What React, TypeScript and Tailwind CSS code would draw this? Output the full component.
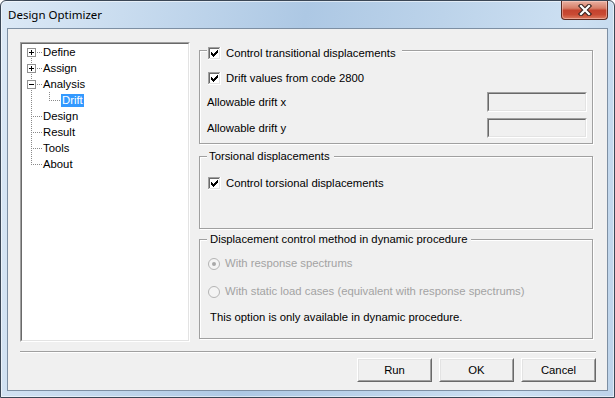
import type { ReactNode } from 'react';

const FONT = "font-['Liberation_Sans',Arial,sans-serif]";

type TreeRow = {
  label: string;
  level: 0 | 1;
  box?: '+' | '-';
  first?: boolean;
  last?: boolean;
  selected?: boolean;
};

const TREE: TreeRow[] = [
  { label: 'Define', level: 0, box: '+', first: true },
  { label: 'Assign', level: 0, box: '+' },
  { label: 'Analysis', level: 0, box: '-' },
  { label: 'Drift', level: 1, selected: true },
  { label: 'Design', level: 0 },
  { label: 'Result', level: 0 },
  { label: 'Tools', level: 0 },
  { label: 'About', level: 0, last: true },
];

// dotted connector, one pixel on / one off
function dots(x1: number, y1: number, x2: number, y2: number) {
  const out: ReactNode[] = [];
  if (y1 === y2) {
    for (let x = x1; x <= x2; x += 2) out.push(<rect key={`h${x}-${y1}`} x={x} y={y1} width={1} height={1} />);
  } else {
    for (let y = y1; y <= y2; y += 2) out.push(<rect key={`v${x1}-${y}`} x={x1} y={y} width={1} height={1} />);
  }
  return out;
}

function TreeGutter({ row }: { row: TreeRow }) {
  const w = row.level === 0 ? 20 : 39;
  return (
    <svg width={w} height={16} className="shrink-0" shapeRendering="crispEdges">
      <g fill="#8a8a8a">
        {row.level === 1 ? (
          <>
            {dots(9, 0, 9, 15)}
            {dots(27, 0, 27, 8)}
            {dots(29, 8, 37, 8)}
          </>
        ) : row.box ? (
          <>
            {!row.first && dots(9, 0, 9, 3)}
            {dots(9, 14, 9, 15)}
            {dots(15, 8, 19, 8)}
          </>
        ) : (
          <>
            {dots(9, 0, 9, row.last ? 8 : 15)}
            {dots(11, 8, 19, 8)}
          </>
        )}
      </g>
      {row.box && (
        <>
          <rect x={5.5} y={4.5} width={8} height={8} fill="#fff" stroke="#919191" />
          <rect x={7} y={8} width={5} height={1} fill="#000" />
          {row.box === '+' && <rect x={9} y={6} width={1} height={5} fill="#000" />}
        </>
      )}
    </svg>
  );
}

function CheckBox() {
  const cols = [2, 3, 4, 3, 2, 1, 0];
  return (
    <svg width={13} height={13} className="shrink-0" shapeRendering="crispEdges">
      <rect x={0} y={0} width={13} height={13} fill="#fff" />
      <rect x={0} y={0} width={12} height={1} fill="#a0a0a0" />
      <rect x={0} y={0} width={1} height={12} fill="#a0a0a0" />
      <rect x={1} y={1} width={10} height={1} fill="#696969" />
      <rect x={1} y={1} width={1} height={10} fill="#696969" />
      <rect x={1} y={11} width={11} height={1} fill="#e3e3e3" />
      <rect x={11} y={1} width={1} height={11} fill="#e3e3e3" />
      {cols.map((s, c) => (
        <rect key={c} x={3 + c} y={3 + s} width={1} height={3} fill="#000" />
      ))}
    </svg>
  );
}

function Radio({ checked }: { checked?: boolean }) {
  return (
    <svg width={12} height={12} className="shrink-0">
      <circle cx={6} cy={6} r={5.5} fill="#f4f4f4" stroke="#b4b4b4" />
      {checked && <circle cx={6} cy={6} r={2} fill="#a8a8a8" />}
    </svg>
  );
}

function Sunken({ className, children }: { className: string; children?: ReactNode }) {
  return (
    <div className={`border border-t-[#a0a0a0] border-l-[#a0a0a0] border-r-white border-b-white ${className}`}>
      <div className="h-full w-full border border-t-[#696969] border-l-[#696969] border-r-[#e3e3e3] border-b-[#e3e3e3]">
        {children}
      </div>
    </div>
  );
}

function DlgButton({ children }: { children: ReactNode }) {
  return (
    <button
      type="button"
      className="h-[24px] w-[75px] border border-t-white border-l-white border-r-[#696969] border-b-[#696969] bg-[#f0f0f0] p-0"
    >
      <div className="flex h-full w-full items-center justify-center border border-t-[#e3e3e3] border-l-[#e3e3e3] border-r-[#a0a0a0] border-b-[#a0a0a0] text-[11.3px] text-black">
        {children}
      </div>
    </button>
  );
}

const GROUP = 'relative border border-[#a0a0a0] shadow-[inset_1px_1px_0_#fff,1px_1px_0_#fff]';

export default function App() {
  return (
    <div className="h-[398px] w-[615px] bg-white">
      <div className="relative flex h-[398px] w-[615px] flex-col rounded-t-[6px] border border-[#3b4756] bg-[linear-gradient(100deg,#dce9f6_0%,#c9dcef_18%,#adc8e4_45%,#bcd3ea_65%,#cde0f2_85%,#bdd3ea_100%)] shadow-[inset_0_0_0_1px_rgba(255,255,255,0.55)]">
        {/* title bar */}
        <div className="flex h-[27px] shrink-0 items-center pl-[7px] pt-[1px] font-['Noto_Sans',sans-serif] text-[11.5px] text-black">
          Design Optimizer
        </div>
        <div className="absolute right-[6px] top-0 flex h-[19px] w-[47px] items-center justify-center rounded-b-[4px] border border-t-0 border-[#5b2a21] bg-[linear-gradient(180deg,#eab1a2_0%,#d77e68_40%,#c4432e_52%,#c94a33_75%,#dc7a5e_100%)] shadow-[inset_0_0_0_1px_rgba(255,220,210,0.45)]">
          <svg width={16} height={12} viewBox="0 0 16 12">
            <path d="M4 2 L12 10 M12 2 L4 10" stroke="#3d2622" strokeWidth={4.4} strokeLinecap="square" />
            <path d="M4 2 L12 10 M12 2 L4 10" stroke="#fff" strokeWidth={2.2} strokeLinecap="square" />
          </svg>
        </div>

        {/* client area */}
        <div className={`mx-[6px] mb-[6px] flex flex-1 flex-col border border-[#7d8fa3] bg-[#f0f0f0] pl-[12px] pt-[13px] text-[11.3px] text-black ${FONT}`}>
          <div className="flex">
            <Sunken className="h-[300px] w-[170px] bg-white">
              <div className="flex flex-col">
                {TREE.map((row) => (
                  <div key={row.label} className="flex h-[16px] items-center">
                    <TreeGutter row={row} />
                    <span
                      className={
                        row.selected
                          ? 'h-[13px] bg-[#3399ff] px-[1px] leading-[13px] text-white'
                          : 'h-[13px] px-[1px] leading-[13px]'
                      }
                    >
                      {row.label}
                    </span>
                  </div>
                ))}
              </div>
            </Sunken>

            <div className="ml-[9px] flex w-[394px] flex-col pt-[8px]">
              {/* transitional displacements */}
              <div className={`${GROUP} h-[94px] pl-[8px] pr-[5px] pt-[21px]`}>
                <div className="absolute left-[7px] top-[-4px] flex h-[13px] items-center gap-[5px] bg-[#f0f0f0] pl-[1px] pr-[6px] leading-[13px]">
                  <CheckBox />
                  <span>Control transitional displacements</span>
                </div>
                <div className="flex h-[13px] items-center gap-[5px] leading-[13px]">
                  <CheckBox />
                  <span>Drift values from code 2800</span>
                </div>
                <div className="mt-[7px] flex h-[20px] items-center justify-between -ml-[1px]">
                  <span>Allowable drift x</span>
                  <Sunken className="h-[20px] w-[100px] bg-[#f0f0f0]" />
                </div>
                <div className="mt-[6px] flex h-[20px] items-center justify-between -ml-[1px]">
                  <span>Allowable drift y</span>
                  <Sunken className="h-[20px] w-[100px] bg-[#f0f0f0]" />
                </div>
              </div>

              {/* torsional */}
              <div className={`${GROUP} mt-[12px] h-[73px] pl-[8px] pt-[20px]`}>
                <div className="absolute left-[7px] top-[-7px] bg-[#f0f0f0] pl-[2px] pr-[4px] leading-[13px]">
                  Torsional displacements
                </div>
                <div className="flex h-[13px] items-center gap-[5px] leading-[13px]">
                  <CheckBox />
                  <span>Control torsional displacements</span>
                </div>
              </div>

              {/* dynamic procedure */}
              <div className={`${GROUP} mt-[10px] h-[100px] pl-[8px] pt-[17px]`}>
                <div className="absolute left-[7px] top-[-7px] bg-[#f0f0f0] pl-[3px] pr-[4px] leading-[13px]">
                  Displacement control method in dynamic procedure
                </div>
                <div className="flex h-[13px] items-center gap-[5px] leading-[13px] text-[#a3a3a3]">
                  <Radio checked />
                  <span>With response spectrums</span>
                </div>
                <div className="mt-[15px] flex h-[13px] items-center gap-[5px] leading-[13px] text-[#a3a3a3]">
                  <Radio />
                  <span>With static load cases (equivalent with response spectrums)</span>
                </div>
                <div className="mt-[13px] h-[13px] pl-[2px] leading-[13px]">
                  This option is only available in dynamic procedure.
                </div>
              </div>
            </div>
          </div>

          <div className="mt-[9px] h-[2px] w-[576px] border-t border-b border-t-[#a0a0a0] border-b-white" />

          <div className="mt-[5px] flex w-[576px] justify-end gap-[7px]">
            <DlgButton>Run</DlgButton>
            <DlgButton>OK</DlgButton>
            <DlgButton>Cancel</DlgButton>
          </div>
        </div>
      </div>
    </div>
  );
}
